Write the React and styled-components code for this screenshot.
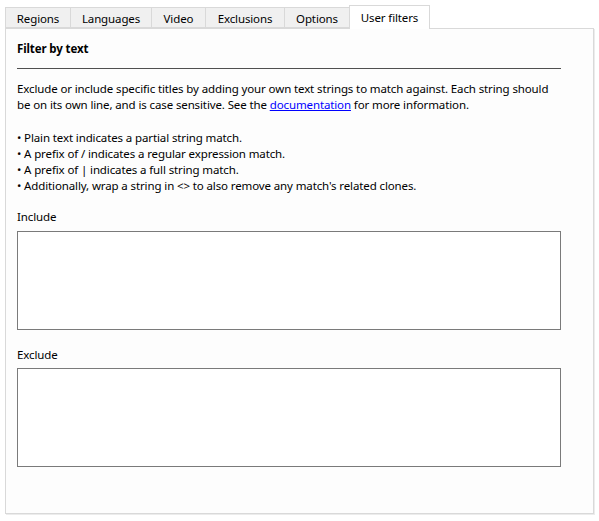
import styled, { createGlobalStyle } from 'styled-components';

const Global = createGlobalStyle`
    html, body {
        margin: 0;
        background: #ffffff;
    }
    body {
        font-family: "Segoe UI", "Noto Sans", "Liberation Sans", sans-serif;
        font-size: 11.5px;
        letter-spacing: -0.12px;
        color: #000000;
    }
`

const Window = styled.div`
    width: 599px;
    height: 521px;
    box-sizing: border-box;
    padding: 5px 5px 0 5px;
`

const TabStrip = styled.div`
    display: flex;
    align-items: flex-end;
    height: 23px;
    position: relative;
    z-index: 1;
`

const Tab = styled.div`
    box-sizing: border-box;
    width: ${p => p.$w}px;
    height: ${p => p.$active ? 24 : 21}px;
    margin-left: ${p => p.$first ? 0 : -1}px;
    margin-bottom: ${p => p.$active ? -1 : 0}px;
    border: 1px solid #d9d9d9;
    border-bottom: ${p => p.$active ? 'none' : '1px solid #d9d9d9'};
    background: ${p => p.$active ? '#ffffff' : '#f0f0f0'};
    display: flex;
    align-items: center;
    justify-content: center;
    padding-top: ${p => p.$active ? 0 : 3}px;
    line-height: 16px;
    white-space: nowrap;
`

const Panel = styled.div`
    box-sizing: border-box;
    width: 589px;
    height: 486px;
    border: 1px solid #d9d9d9;
    box-shadow: 1px 1px 0 #ececec;
    background: #fdfdfd;
    padding: 12px 32px 0 11px;
`

const Heading = styled.div`
    font-weight: bold;
    line-height: 16px;
`

const Rule = styled.div`
    height: 1px;
    background: #505050;
    margin: 11px 0 12px 0;
`

const Text = styled.p`
    margin: 0;
    line-height: 16px;
    white-space: nowrap;
`

const Link = styled.a`
    color: #0000ff;
    text-decoration: underline;
`

const Bullets = styled.ul`
    list-style: none;
    margin: 17px 0 0 0;
    padding: 0;
    line-height: 16px;
`

const Field = styled.div`
    display: flex;
    flex-direction: column;
    gap: ${p => p.$gap}px;
    margin-top: ${p => p.$top}px;
`

const Label = styled.label`
    line-height: 16px;
    padding-top: 1px;
`

const TextBox = styled.textarea`
    box-sizing: border-box;
    width: 544px;
    height: 99px;
    margin: 0;
    border: 1px solid #7a7a7a;
    border-radius: 0;
    background: #ffffff;
    resize: none;
    outline: none;
    font: inherit;
`

const tabs = [
    { name: 'Regions', w: 66 },
    { name: 'Languages', w: 82 },
    { name: 'Video', w: 55 },
    { name: 'Exclusions', w: 80 },
    { name: 'Options', w: 66 },
    { name: 'User filters', w: 81, active: true },
]

const App = () => {
    return (
        <Window>
            <Global />
            <TabStrip>
                {tabs.map((t, i) => (
                    <Tab key={t.name} $w={t.w} $first={i === 0} $active={t.active}>{t.name}</Tab>
                ))}
            </TabStrip>
            <Panel>
                <Heading>Filter by text</Heading>
                <Rule />
                <Text>
                    Exclude or include specific titles by adding your own text strings to match against. Each string should<br />
                    be on its own line, and is case sensitive. See the <Link href="#">documentation</Link> for more information.
                </Text>
                <Bullets>
                    <li>• Plain text indicates a partial string match.</li>
                    <li>• A prefix of / indicates a regular expression match.</li>
                    <li>• A prefix of | indicates a full string match.</li>
                    <li>• Additionally, wrap a string in &lt;&gt; to also remove any match's related clones.</li>
                </Bullets>
                <Field $top={14} $gap={6}>
                    <Label>Include</Label>
                    <TextBox />
                </Field>
                <Field $top={16} $gap={5}>
                    <Label>Exclude</Label>
                    <TextBox />
                </Field>
            </Panel>
        </Window>
    );
}

export default App;
